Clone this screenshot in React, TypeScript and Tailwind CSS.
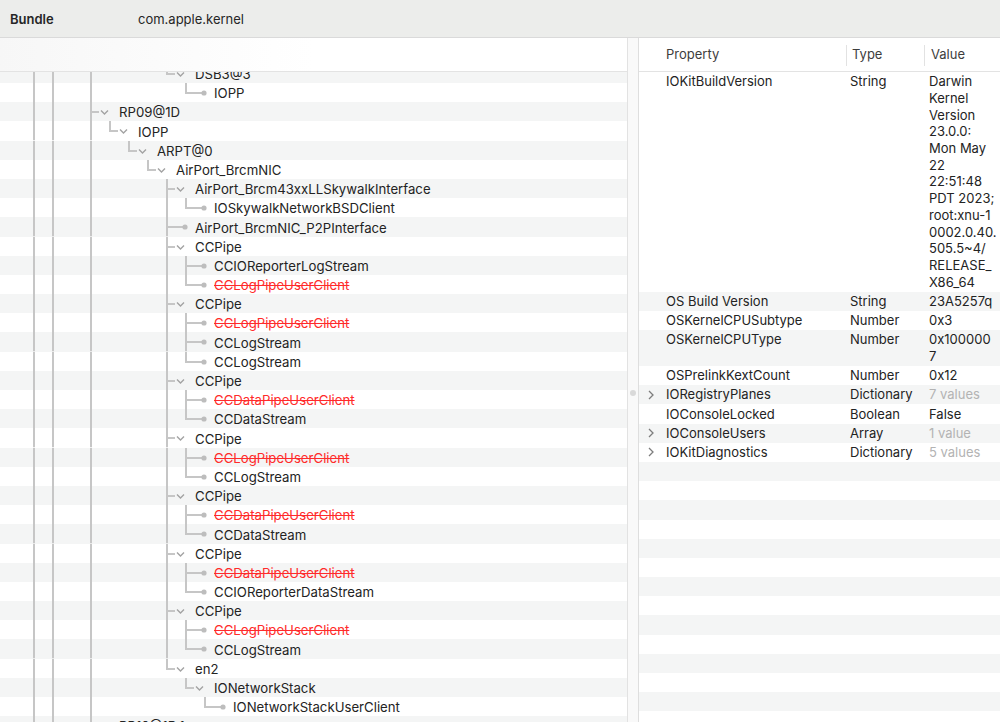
import clsx from "clsx";

type TreeNode = { level: number; name: string; open?: boolean; strike?: boolean };

// visible slice of the registry tree (scrolled so DSB3@3 is half hidden)
const nodes: TreeNode[] = [
  { level: 9, name: "DSB3@3", open: true },
  { level: 10, name: "IOPP" },
  { level: 5, name: "RP09@1D", open: true },
  { level: 6, name: "IOPP", open: true },
  { level: 7, name: "ARPT@0", open: true },
  { level: 8, name: "AirPort_BrcmNIC", open: true },
  { level: 9, name: "AirPort_Brcm43xxLLSkywalkInterface", open: true },
  { level: 10, name: "IOSkywalkNetworkBSDClient" },
  { level: 9, name: "AirPort_BrcmNIC_P2PInterface" },
  { level: 9, name: "CCPipe", open: true },
  { level: 10, name: "CCIOReporterLogStream" },
  { level: 10, name: "CCLogPipeUserClient", strike: true },
  { level: 9, name: "CCPipe", open: true },
  { level: 10, name: "CCLogPipeUserClient", strike: true },
  { level: 10, name: "CCLogStream" },
  { level: 10, name: "CCLogStream" },
  { level: 9, name: "CCPipe", open: true },
  { level: 10, name: "CCDataPipeUserClient", strike: true },
  { level: 10, name: "CCDataStream" },
  { level: 9, name: "CCPipe", open: true },
  { level: 10, name: "CCLogPipeUserClient", strike: true },
  { level: 10, name: "CCLogStream" },
  { level: 9, name: "CCPipe", open: true },
  { level: 10, name: "CCDataPipeUserClient", strike: true },
  { level: 10, name: "CCDataStream" },
  { level: 9, name: "CCPipe", open: true },
  { level: 10, name: "CCDataPipeUserClient", strike: true },
  { level: 10, name: "CCIOReporterDataStream" },
  { level: 9, name: "CCPipe", open: true },
  { level: 10, name: "CCLogPipeUserClient", strike: true },
  { level: 10, name: "CCLogStream" },
  { level: 9, name: "en2", open: true },
  { level: 10, name: "IONetworkStack", open: true },
  { level: 11, name: "IONetworkStackUserClient" },
  { level: 5, name: "RP10@1D,1", open: true },
];

// ancestors above the visible part that still have siblings further down
const OUTER_LINES = [2, 3];
const ROW_H = 19.2;
const LINE = "#c6c6c6";

const elbowX = (level: number) => 19 * level - 4;

function continues(index: number, level: number) {
  for (let i = index + 1; i < nodes.length; i++) {
    if (nodes[i].level < level) return false;
    if (nodes[i].level === level) return true;
  }
  return false;
}

function TreeGlyph({ index }: { index: number }) {
  const { level, open } = nodes[index];
  const x = elbowX(level);
  const c = 10;
  const guides: number[] = [];
  for (let k = 1; k < level; k++) {
    if (OUTER_LINES.includes(k) || continues(index, k)) guides.push(elbowX(k));
  }

  return (
    <svg width={19 * level + 24} height={ROW_H} className="shrink-0">
      <g stroke={LINE} strokeWidth={2} fill="none">
        {guides.map((g) => (
          <line key={g} x1={g} x2={g} y1={0} y2={ROW_H} />
        ))}
        <line x1={x} x2={x} y1={0} y2={continues(index, level) ? ROW_H : c + 1} />
        <line x1={x - 1} x2={open ? x + 8 : x + 16} y1={c} y2={c} />
      </g>
      {open ? (
        <polyline
          points={`${x + 10},${c - 1.5} ${x + 13.5},${c + 2} ${x + 17},${c - 1.5}`}
          fill="none"
          stroke="#a3a3a3"
          strokeWidth={1.4}
        />
      ) : (
        <circle cx={x + 18} cy={c} r={2.6} fill="#bdbdbd" />
      )}
    </svg>
  );
}

type Prop = { name: string; type: string; value: string[]; more?: boolean };

const props: Prop[] = [
  {
    name: "IOKitBuildVersion",
    type: "String",
    value: [
      "Darwin",
      "Kernel",
      "Version",
      "23.0.0:",
      "Mon May",
      "22",
      "22:51:48",
      "PDT 2023;",
      "root:xnu-1",
      "0002.0.40.",
      "505.5~4/",
      "RELEASE_",
      "X86_64",
    ],
  },
  { name: "OS Build Version", type: "String", value: ["23A5257q"] },
  { name: "OSKernelCPUSubtype", type: "Number", value: ["0x3"] },
  { name: "OSKernelCPUType", type: "Number", value: ["0x100000", "7"] },
  { name: "OSPrelinkKextCount", type: "Number", value: ["0x12"] },
  { name: "IORegistryPlanes", type: "Dictionary", value: ["7 values"], more: true },
  { name: "IOConsoleLocked", type: "Boolean", value: ["False"] },
  { name: "IOConsoleUsers", type: "Array", value: ["1 value"], more: true },
  { name: "IOKitDiagnostics", type: "Dictionary", value: ["5 values"], more: true },
];

function Disclosure() {
  return (
    <svg width="8" height="10" viewBox="0 0 8 10" className="shrink-0">
      <polyline points="2,1 6,5 2,9" fill="none" stroke="#7d7d7d" strokeWidth={1.3} />
    </svg>
  );
}

function PropertyTable() {
  const fillers = Array.from({ length: 14 }, (_, i) => props.length + i);
  return (
    <div className="flex min-w-0 flex-1 flex-col bg-white">
      <div className="flex h-[34px] shrink-0 items-center border-b border-[#e3e3e3] pl-[27px] pt-[1px] text-[#3d3d3d]">
        <div className="w-[180px]">Property</div>
        <div className="h-[21px] w-px bg-[#e2e2e2]" />
        <div className="w-[77px] pl-[5px]">Type</div>
        <div className="h-[21px] w-px bg-[#e2e2e2]" />
        <div className="pl-[6px]">Value</div>
      </div>
      <div className="min-h-0 flex-1 overflow-hidden">
        {props.map((p, i) => (
          <div
            key={p.name}
            className={clsx(
              "flex py-[1.25px] leading-[16.7px] text-[#232323]",
              i % 2 === 1 ? "bg-[#f4f5f5]" : "bg-white",
            )}
          >
            <div className="flex h-[16.7px] w-[27px] shrink-0 items-center pl-[8px]">
              {p.more ? <Disclosure /> : null}
            </div>
            <div className="w-[184px] shrink-0 whitespace-nowrap">{p.name}</div>
            <div className="w-[79px] shrink-0 whitespace-nowrap">{p.type}</div>
            <div className={clsx("whitespace-nowrap", p.more && "text-[#b3b3b3]")}>
              {p.value.map((line, j) => (
                <div key={j}>{line}</div>
              ))}
            </div>
          </div>
        ))}
        {fillers.map((i) => (
          <div key={i} className={clsx("h-[19.2px]", i % 2 === 1 ? "bg-[#f4f5f5]" : "bg-white")} />
        ))}
      </div>
    </div>
  );
}

export default function App() {
  return (
    <div className="flex h-[722px] w-[1000px] flex-col overflow-hidden bg-white font-['Inter',sans-serif] text-[13px]">
      <div className="flex h-[38px] shrink-0 items-center border-b border-[#dadada] bg-[#ecedeb] pt-[2px] text-[#262626]">
        <div className="w-[138px] pl-[10px] font-semibold">Bundle</div>
        <div>com.apple.kernel</div>
      </div>

      <div className="flex min-h-0 flex-1">
        <div className="flex w-[628px] shrink-0 flex-col border-r border-[#e2e2e2]">
          <div className="h-[34px] shrink-0 border-b border-[#e3e3e3] bg-gradient-to-r from-[#f7f7f7] via-white to-white" />
          <div className="min-h-0 flex-1 overflow-hidden">
            <div className="-mt-[8.2px]">
              {nodes.map((n, i) => (
                <div
                  key={i}
                  className={clsx(
                    "flex h-[19.2px] items-center whitespace-nowrap text-[13.2px]",
                    i % 2 === 0 ? "bg-[#f4f5f5]" : "bg-white",
                  )}
                >
                  <TreeGlyph index={i} />
                  <span
                    className={clsx(
                      "pt-[3px]",
                      n.strike ? "text-[#ff2b2b] line-through" : "text-[#232323]",
                    )}
                  >
                    {n.name}
                  </span>
                </div>
              ))}
            </div>
          </div>
        </div>

        <div className="flex w-[11px] shrink-0 items-center justify-center border-r border-[#dedede] bg-[#f9f9f9] pt-[26px]">
          <div className="h-[6px] w-[6px] rounded-full bg-[#d9d9d9]" />
        </div>

        <PropertyTable />
      </div>
    </div>
  );
}
